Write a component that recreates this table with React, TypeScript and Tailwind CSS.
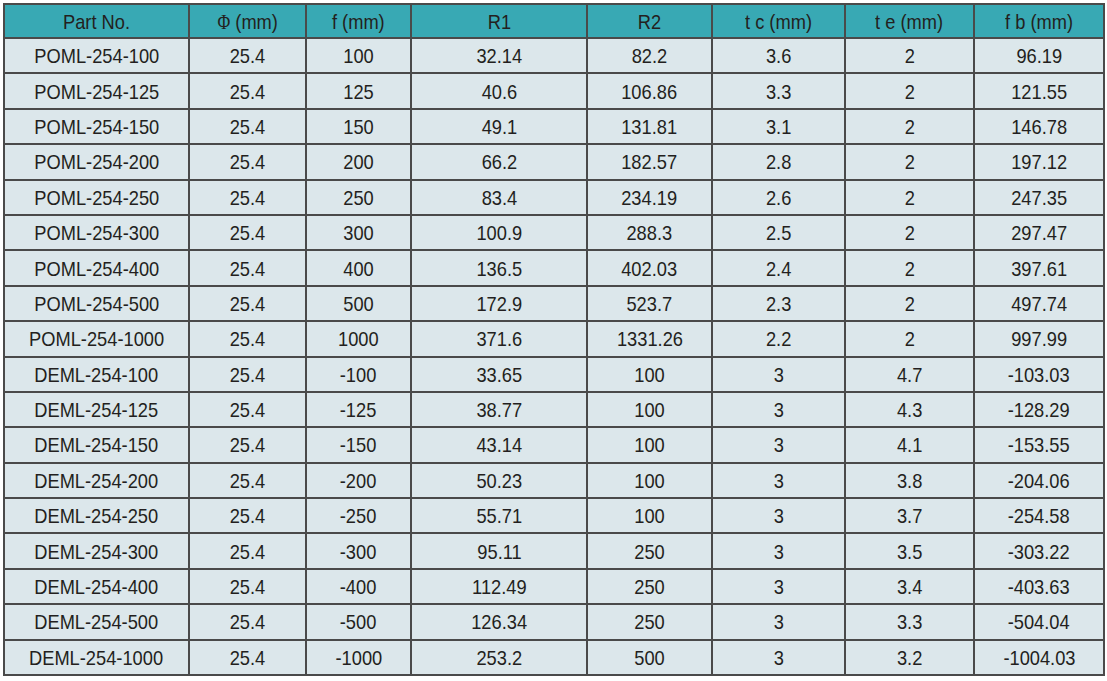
const headers = ["Part No.", "PHI", "f (mm)", "R1", "R2", "t c (mm)", "t e (mm)", "f b (mm)"];

const widths = [185, 117, 105, 176, 125, 133, 129, 130];

const rows: string[][] = [
  ["POML-254-100", "25.4", "100", "32.14", "82.2", "3.6", "2", "96.19"],
  ["POML-254-125", "25.4", "125", "40.6", "106.86", "3.3", "2", "121.55"],
  ["POML-254-150", "25.4", "150", "49.1", "131.81", "3.1", "2", "146.78"],
  ["POML-254-200", "25.4", "200", "66.2", "182.57", "2.8", "2", "197.12"],
  ["POML-254-250", "25.4", "250", "83.4", "234.19", "2.6", "2", "247.35"],
  ["POML-254-300", "25.4", "300", "100.9", "288.3", "2.5", "2", "297.47"],
  ["POML-254-400", "25.4", "400", "136.5", "402.03", "2.4", "2", "397.61"],
  ["POML-254-500", "25.4", "500", "172.9", "523.7", "2.3", "2", "497.74"],
  ["POML-254-1000", "25.4", "1000", "371.6", "1331.26", "2.2", "2", "997.99"],
  ["DEML-254-100", "25.4", "-100", "33.65", "100", "3", "4.7", "-103.03"],
  ["DEML-254-125", "25.4", "-125", "38.77", "100", "3", "4.3", "-128.29"],
  ["DEML-254-150", "25.4", "-150", "43.14", "100", "3", "4.1", "-153.55"],
  ["DEML-254-200", "25.4", "-200", "50.23", "100", "3", "3.8", "-204.06"],
  ["DEML-254-250", "25.4", "-250", "55.71", "100", "3", "3.7", "-254.58"],
  ["DEML-254-300", "25.4", "-300", "95.11", "250", "3", "3.5", "-303.22"],
  ["DEML-254-400", "25.4", "-400", "112.49", "250", "3", "3.4", "-403.63"],
  ["DEML-254-500", "25.4", "-500", "126.34", "250", "3", "3.3", "-504.04"],
  ["DEML-254-1000", "25.4", "-1000", "253.2", "500", "3", "3.2", "-1004.03"],
];

// the print uses a condensed face, so squeeze Liberation Sans a little
function Narrow({ children }: { children: React.ReactNode }) {
  return <span className="inline-block whitespace-nowrap scale-x-[0.87]">{children}</span>;
}

export default function App() {
  return (
    <div className="w-[1107px] h-[681px] bg-white pl-[3px] pt-[3px]">
      <table className="border-collapse table-fixed w-[1100px] text-[#231f20] text-[21px] leading-none font-['Liberation_Sans',Arial,sans-serif]">
        <colgroup>
          {widths.map((w, i) => (
            <col key={i} style={{ width: w }} />
          ))}
        </colgroup>
        <thead>
          <tr className="h-[34px] bg-[#38a9b4]">
            {headers.map((h) => (
              <th key={h} className="border-2 border-[#4a4a4a] font-normal text-center p-0">
                <Narrow>
                  {h === "PHI" ? (
                    <>
                      <span className="font-['Liberation_Serif',serif] text-[20px]">Φ</span> (mm)
                    </>
                  ) : (
                    h
                  )}
                </Narrow>
              </th>
            ))}
          </tr>
        </thead>
        <tbody>
          {rows.map((r) => (
            <tr key={r[0]} className="h-[35.4px] bg-[#dce7eb]">
              {r.map((c, i) => (
                <td key={i} className="border-2 border-[#4a4a4a] text-center p-0">
                  <Narrow>{c}</Narrow>
                </td>
              ))}
            </tr>
          ))}
        </tbody>
      </table>
    </div>
  );
}
